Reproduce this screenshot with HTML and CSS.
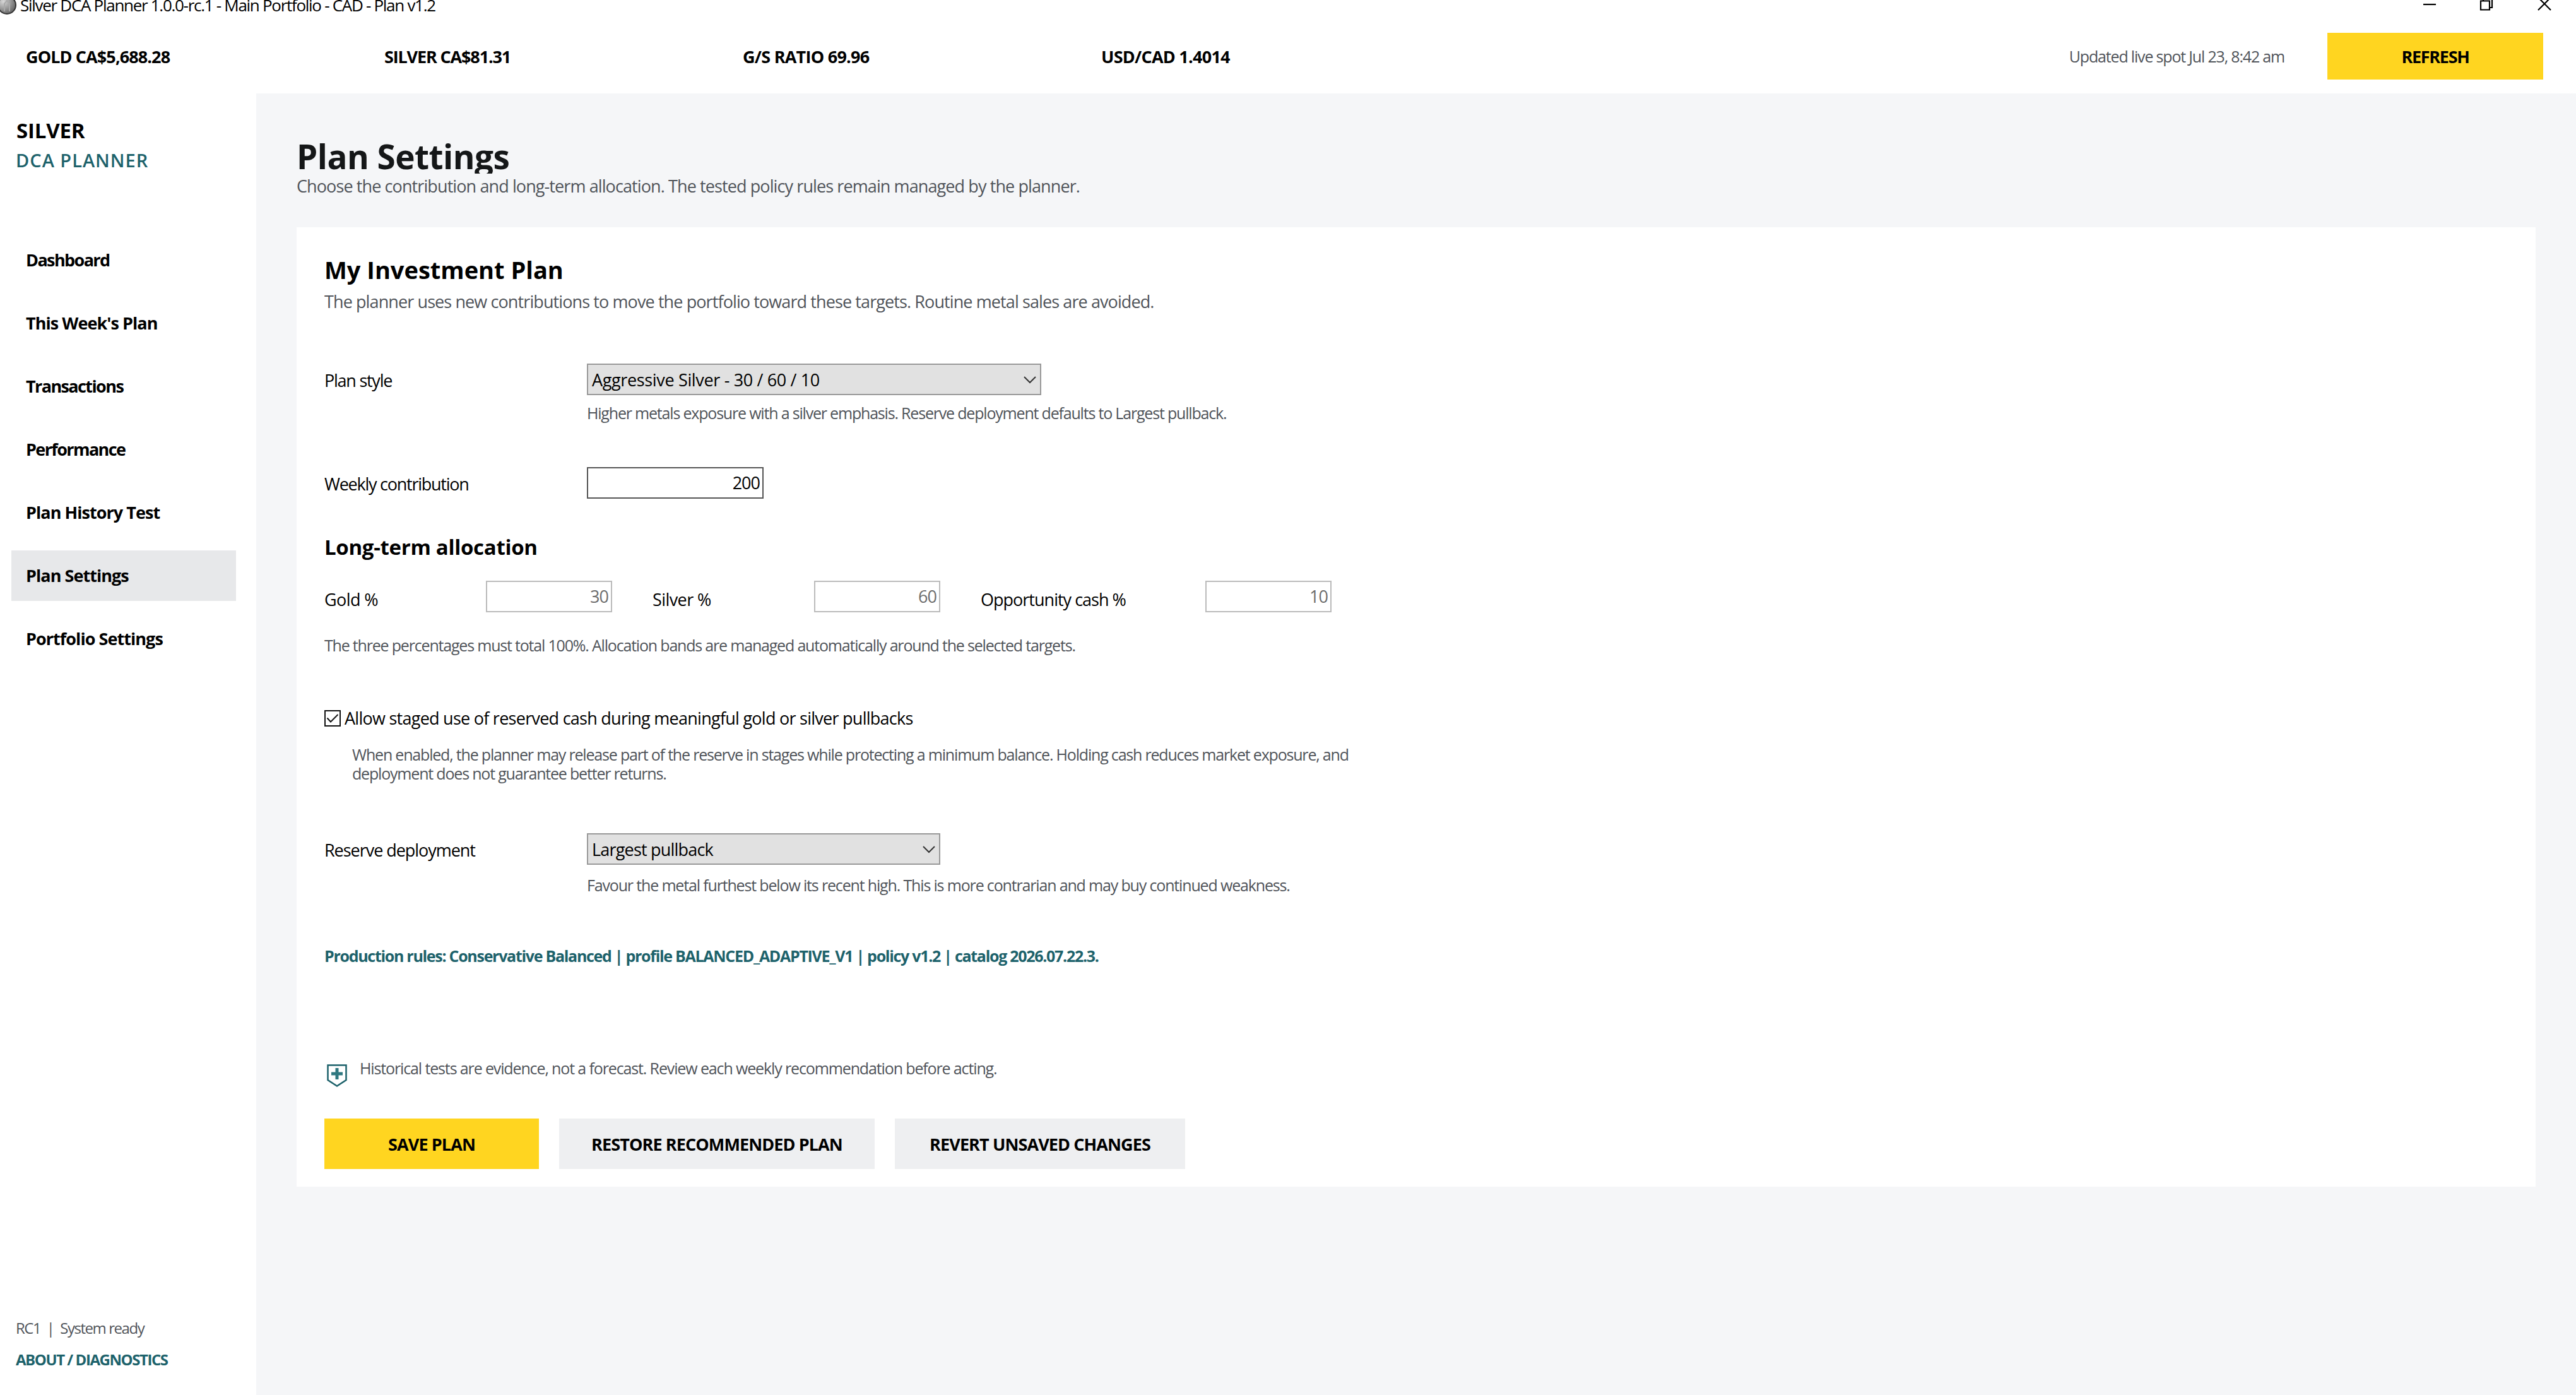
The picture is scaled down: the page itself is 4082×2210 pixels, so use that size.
FILE: index.html
```
<!DOCTYPE html>
<html lang="en">
<head>
    <meta charset="UTF-8">
    <title>Silver DCA Planner</title>
    <link rel="stylesheet" href="styles.css">
</head>
<body>
    <div class="titlebar">
        <svg class="app-icon" width="22" height="24" viewBox="0 0 22 24">
            <defs>
                <radialGradient id="coin" cx="0.3" cy="0.3" r="0.7">
                    <stop offset="0" stop-color="#d8d8d8"/>
                    <stop offset="1" stop-color="#6e6e6e"/>
                </radialGradient>
            </defs>
            <circle cx="6" cy="8" r="14" fill="url(#coin)" stroke="#333" stroke-width="2"/>
            <path d="M2 18V6l4-5 4 5v12" fill="none" stroke="#a9a9a9" stroke-width="2"/>
        </svg>
        <span class="window-title">Silver DCA Planner 1.0.0-rc.1 - Main Portfolio - CAD - Plan v1.2</span>
        <svg class="window-buttons" width="206" height="30" viewBox="0 0 206 30" fill="none" stroke="#000" stroke-width="2.2">
            <path d="M0 7h20"/>
            <path d="M91 1.500h14v14h-14zM95 1V-3h14v15h-4"/>
            <path d="M182 16L202-4M202 16L182-4"/>
        </svg>
    </div>

    <header class="ticker-bar">
        <div class="ticker">GOLD CA$5,688.28</div>
        <div class="ticker ticker-silver">SILVER CA$81.31</div>
        <div class="ticker ticker-ratio">G/S RATIO 69.96</div>
        <div class="ticker ticker-fx">USD/CAD 1.4014</div>
        <span class="updated">Updated live spot Jul 23, 8:42 am</span>
        <button class="btn btn-primary btn-refresh">REFRESH</button>
    </header>

    <div class="layout">
        <aside class="sidebar">
            <div class="brand">SILVER</div>
            <div class="brand-sub">DCA PLANNER</div>
            <nav class="nav">
                <a class="nav-item tight">Dashboard</a>
                <a class="nav-item">This Week's Plan</a>
                <a class="nav-item tight">Transactions</a>
                <a class="nav-item tight">Performance</a>
                <a class="nav-item">Plan History Test</a>
                <a class="nav-item active">Plan Settings</a>
                <a class="nav-item">Portfolio Settings</a>
            </nav>
            <div class="sidebar-footer">
                <div class="status">RC1&nbsp; |&nbsp; System ready</div>
                <a class="about">ABOUT / DIAGNOSTICS</a>
            </div>
        </aside>

        <main class="content">
            <h1 class="page-title">Plan Settings</h1>
            <p class="page-subtitle">Choose the contribution and long-term allocation. The tested policy rules remain managed by the planner.</p>

            <section class="card">
                <h2 class="card-title">My Investment Plan</h2>
                <p class="card-subtitle">The planner uses new contributions to move the portfolio toward these targets. Routine metal sales are avoided.</p>

                <div class="field-row style-row">
                    <label class="label">Plan style</label>
                    <div class="select select-wide">
                        <span>Aggressive Silver - 30 / 60 / 10</span>
                        <svg class="chevron" width="20" height="12" viewBox="0 0 20 12"><path d="M1 1l9 9 9-9" fill="none" stroke="#333" stroke-width="2"/></svg>
                    </div>
                </div>
                <p class="help style-help">Higher metals exposure with a silver emphasis. Reserve deployment defaults to Largest pullback.</p>

                <div class="field-row weekly-row">
                    <label class="label">Weekly contribution</label>
                    <input class="input input-weekly" type="text" value="200">
                </div>

                <h3 class="section-title">Long-term allocation</h3>
                <div class="allocation">
                    <label class="label">Gold %</label>
                    <input class="input" type="text" value="30" disabled>
                    <label class="label">Silver %</label>
                    <input class="input" type="text" value="60" disabled>
                    <label class="label label-cash">Opportunity cash %</label>
                    <input class="input" type="text" value="10" disabled>
                </div>
                <p class="note">The three percentages must total 100%. Allocation bands are managed automatically around the selected targets.</p>

                <div class="check-row">
                    <svg class="checkbox" width="26" height="26" viewBox="0 0 26 26" fill="none" stroke="#111">
                        <rect x="1" y="1" width="24" height="24" stroke-width="2"/>
                        <path d="M4.500 12.500l5.500 6L21.500 7" stroke-width="2"/>
                    </svg>
                    <span>Allow staged use of reserved cash during meaningful gold or silver pullbacks</span>
                </div>
                <p class="check-help">When enabled, the planner may release part of the reserve in stages while protecting a minimum balance. Holding cash reduces market exposure, and<br>deployment does not guarantee better returns.</p>

                <div class="field-row reserve-row">
                    <label class="label label-reserve">Reserve deployment</label>
                    <div class="select select-reserve">
                        <span>Largest pullback</span>
                        <svg class="chevron" width="20" height="12" viewBox="0 0 20 12"><path d="M1 1l9 9 9-9" fill="none" stroke="#333" stroke-width="2"/></svg>
                    </div>
                </div>
                <p class="help reserve-help">Favour the metal furthest below its recent high. This is more contrarian and may buy continued weakness.</p>

                <p class="rules">Production rules: Conservative Balanced | profile BALANCED_ADAPTIVE_V1 | policy v1.2 | catalog 2026.07.22.3.</p>

                <div class="notice">
                    <svg class="shield" width="32" height="36" viewBox="0 0 32 36">
                        <path d="M1.500 1.500h29V25L16 34.500 1.500 25z" fill="none" stroke="#1d626b" stroke-width="2.500"/>
                        <path d="M16 6v18M7 15h18" stroke="#2f7880" stroke-width="5"/>
                    </svg>
                    <span>Historical tests are evidence, not a forecast. Review each weekly recommendation before acting.</span>
                </div>

                <div class="actions">
                    <button class="btn btn-primary btn-save">SAVE PLAN</button>
                    <button class="btn btn-restore">RESTORE RECOMMENDED PLAN</button>
                    <button class="btn btn-revert">REVERT UNSAVED CHANGES</button>
                </div>
            </section>
        </main>
    </div>
</body>
</html>
```
FILE: styles.css
```
* {
    margin: 0;
    padding: 0;
    box-sizing: border-box;
}

body {
    width: 4082px;
    height: 2210px;
    overflow: hidden;
    background: #fff;
    color: #000;
    font-family: "Open Sans", "Noto Sans", sans-serif;
    font-size: 27px;
    line-height: 40px;
    letter-spacing: -0.9px;
    white-space: nowrap;
}

/* window title bar */
.titlebar {
    display: flex;
    height: 30px;
}

.app-icon {
    width: 32px;
}

.window-title {
    font-size: 26px;
    line-height: 16px;
    letter-spacing: -1.29px;
}

.window-buttons {
    margin-left: auto;
    margin-right: 36px;
}

/* prices */
.ticker-bar {
    display: flex;
    align-items: flex-start;
    height: 118px;
    padding: 22px 52px 0 41px;
}

.ticker {
    width: 568px;
    padding-top: 18px;
    font-weight: 700;
}

.ticker-silver {
    letter-spacing: -1.15px;
}

.ticker-ratio,
.ticker-fx {
    letter-spacing: -0.74px;
}

.updated {
    margin-left: auto;
    margin-right: 68px;
    padding-top: 17px;
    font-size: 25px;
    letter-spacing: -1.18px;
    color: #50545a;
}

.btn {
    height: 80px;
    border: none;
    background: #eeeff1;
    color: #000;
    font-family: inherit;
    font-size: 27px;
    font-weight: 700;
    letter-spacing: -0.9px;
}

.btn-primary {
    background: #ffd520;
}

.btn-refresh {
    width: 342px;
    height: 74px;
    letter-spacing: -1.3px;
}

.layout {
    display: flex;
    height: 2062px;
}

/* sidebar */
.sidebar {
    display: flex;
    flex-direction: column;
    width: 406px;
    padding: 39px 32px 0 18px;
}

.brand {
    padding-left: 8px;
    font-size: 33px;
    font-weight: 700;
    letter-spacing: -0.2px;
}

.brand-sub {
    padding-left: 7px;
    margin-top: 7px;
    font-size: 29px;
    font-weight: 600;
    letter-spacing: 1px;
    color: #1d626b;
}

.nav {
    display: flex;
    flex-direction: column;
    gap: 20px;
    margin-top: 98px;
}

.nav-item {
    height: 80px;
    padding-left: 23px;
    font-weight: 700;
    line-height: 80px;
    letter-spacing: -0.95px;
}

.nav-item.tight {
    letter-spacing: -1.6px;
}

.nav-item.active {
    background: #e7e8ea;
}

.sidebar-footer {
    margin-top: auto;
    height: 126px;
    padding-left: 7px;
    font-size: 24px;
}

.status {
    letter-spacing: -1.45px;
    color: #50545a;
}

.about {
    display: block;
    margin-top: 10px;
    font-weight: 700;
    letter-spacing: -1.45px;
    color: #1d626b;
}

/* page */
.content {
    flex: 1;
    padding: 71px 64px 0;
    background: #f5f6f8;
}

.page-title {
    height: 56px;
    overflow: hidden;
    font-size: 53px;
    font-weight: 700;
    line-height: 58px;
    letter-spacing: -0.5px;
    color: #151718;
}

.page-subtitle {
    color: #50545a;
}

.card {
    height: 1520px;
    margin-top: 45px;
    padding: 42px 44px 0;
    background: #fff;
}

.card-title {
    font-size: 38px;
    font-weight: 700;
    line-height: 50px;
    letter-spacing: 0;
}

.card-subtitle {
    margin-top: 6px;
    color: #50545a;
}

.field-row {
    display: grid;
    grid-template-columns: 416px max-content;
    height: 50px;
}

.label {
    padding-top: 7px;
    letter-spacing: -1.25px;
}

.label-reserve {
    letter-spacing: -1.04px;
}

.style-row {
    margin-top: 78px;
}

.weekly-row {
    margin-top: 71px;
}

.reserve-row {
    margin-top: 81px;
}

.select {
    display: flex;
    align-items: center;
    justify-content: space-between;
    height: 50px;
    padding: 2px 6px 0 6px;
    border: 2px solid #999;
    background: #e1e1e1;
}

.select-wide {
    width: 720px;
    letter-spacing: -0.35px;
}

.select-reserve {
    width: 560px;
    letter-spacing: -0.8px;
}

.help,
.note,
.check-help,
.rules,
.notice {
    font-size: 25px;
    line-height: 30px;
    letter-spacing: -1.19px;
    color: #50545a;
}

.help {
    margin-left: 416px;
}

.style-help {
    margin-top: 13px;
}

.reserve-help {
    margin-top: 17px;
    letter-spacing: -1.16px;
}

.input {
    width: 200px;
    height: 50px;
    padding: 0 4px 2px 0;
    border: 2px solid #bbb;
    background: #fff;
    color: #6d6d6d;
    font-family: inherit;
    font-size: 27px;
    letter-spacing: -1px;
    text-align: right;
}

.input-weekly {
    width: 280px;
    border-color: #555;
    color: #000;
}

.section-title {
    margin-top: 57px;
    font-size: 33px;
    font-weight: 700;
    letter-spacing: -0.3px;
}

.allocation {
    display: grid;
    grid-template-columns: 256px 264px 256px 264px 356px 200px;
    height: 50px;
    margin-top: 33px;
}

.allocation .label {
    padding-top: 10px;
    letter-spacing: -0.58px;
}

.allocation .label-cash {
    letter-spacing: -0.99px;
}

.note {
    margin-top: 37px;
}

.check-row {
    display: flex;
    align-items: center;
    gap: 6px;
    margin-top: 81px;
    letter-spacing: -0.74px;
}

.check-help {
    margin-top: 22px;
    margin-left: 44px;
}

.reserve-row {
    margin-top: 80px;
}

.rules {
    margin-top: 82px;
    font-weight: 700;
    letter-spacing: -1.29px;
    color: #1d626b;
}

.notice {
    display: flex;
    gap: 20px;
    margin-top: 148px;
    padding-left: 4px;
    letter-spacing: -1.13px;
}

.shield {
    margin-top: 9px;
}

.actions {
    display: flex;
    gap: 32px;
    margin-top: 50px;
}

.btn-save {
    width: 340px;
}

.btn-restore {
    width: 500px;
}

.btn-revert {
    width: 460px;
}
```
